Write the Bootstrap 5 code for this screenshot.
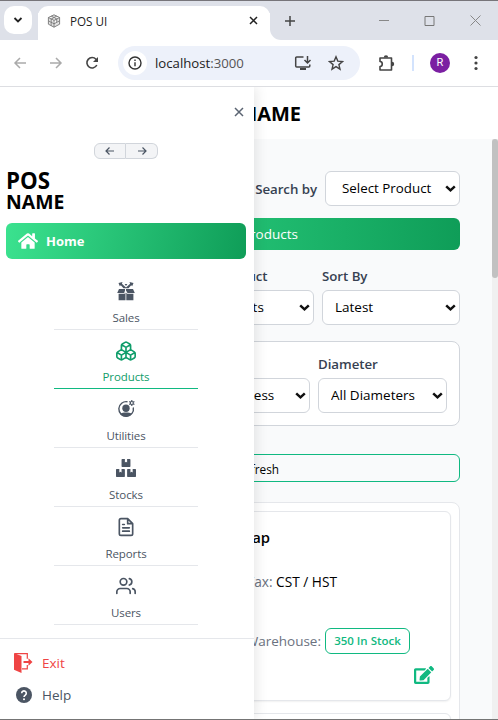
<!DOCTYPE html>
<html lang="en">
<head>
<meta charset="utf-8">
<meta name="viewport" content="width=device-width, initial-scale=1">
<title>POS UI</title>
<link href="https://cdn.jsdelivr.net/npm/bootstrap@5.3.0/dist/css/bootstrap.min.css" rel="stylesheet">
<style>
  body{font-family:"Open Sans","Noto Sans",sans-serif;font-size:13.5px;line-height:20px;color:#000;background:#fff}
  svg{display:block;flex:none}
  .window{height:720px;border-top:1px solid #77757a;border-bottom:1px solid #747474}
  .tabstrip{height:39px;background:#dee1e9}
  .tab-menu{width:28px;height:28px;margin:5px 0 0 4px;border-radius:10px;background:#fff}
  .strip-edge{width:38px;flex:none;background:#dee1e9;border-bottom-right-radius:11px;z-index:1}
  .strip-rest{background:#dee1e9;border-bottom-left-radius:11px;padding-left:15px}
  .tabs-base{background:linear-gradient(#dee1e9 12px,#fff 12px)}
  .browser-tab{width:232px;margin-top:5px;border-radius:10px 10px 0 0;background:#fff;padding:0 12px 5px 9px;font-size:11.7px;color:#222}
  .tab-title{padding-left:9px}
  .win-buttons{gap:35px;padding-right:17px}
  .toolbar{height:47px;background:#fff;border-bottom:1px solid #dddee2;padding:0 14px 0 12px}
  .tb-fwd{margin-left:20px}
  .omnibox{width:242px;height:34px;border-radius:17px;background:#edf1fa;margin-left:18px;padding:0 16px 0 5px}
  .site-info{width:24px;height:24px;border-radius:50%;background:#fff}
  .address{padding-left:8px;font-size:13.2px;color:#222}
  .port{color:#555}
  .star{margin-left:16px}
  .puzzle{margin-left:18px}
  .tb-rule{width:2px;height:16px;background:#d3e3fd;margin:0 16px}
  .avatar{width:20px;height:20px;border-radius:50%;background:#7b1fa2;color:#fff;font:11px/20px Roboto,sans-serif}
  .viewport{min-height:0}
  .page-head{height:52px;padding:2px 197px 0 0;font-size:20px;font-weight:700}
  .page-body{background:#f9fafb}
  .page-main{padding:32px 32px 0;min-width:0}
  .scroll-track{width:6px;background:#f0f0f0}
  .scroll-thumb{height:139px;border-radius:3px;background:#c1c1c1}
  .field-label{font-size:13.3px;font-weight:600;color:#374151;white-space:nowrap;letter-spacing:-.05px}
  .pick{height:35px;font-size:13.5px;color:#000;border:1px solid #d1d5db;border-radius:6px;padding:0 22px 0 12px;background-color:#fff;background-position:right 3px center;background-size:11px 8px;background-image:url("data:image/svg+xml,%3Csvg xmlns='http://www.w3.org/2000/svg' viewBox='0 0 11 8'%3E%3Cpath d='M1.2 1.4 5.5 5.4 9.8 1.4' fill='none' stroke='%23111' stroke-width='2.5'/%3E%3C/svg%3E")}
  .pick-search{width:135px;padding-left:16px;font-size:13.35px}
  .green-bar{height:32px;margin-top:12px;border-radius:6px;background:linear-gradient(90deg,#34e08c,#0f9d58);color:#fff}
  .green-bar span{padding-right:162px}
  .filters{display:grid;grid-template-columns:136px 138px 138px;gap:8px;margin-top:16px}
  .filter-panel{display:grid;grid-template-columns:128px 129px 129px;gap:8px;margin-top:16px;padding:12px;height:85px;border:1px solid #d1d5db;border-radius:8px;background:#fff}
  .filter-field{display:grid;grid-template-rows:20px 35px;row-gap:4px;min-width:0}
  .refresh-btn{height:28px;margin-top:28px;padding:2px 180px 0 0;border:1px solid #10b981;border-radius:6px;font-size:11.8px}
  .listing{margin-top:20px;padding:8px;border:1px solid #e5e7eb;border-radius:8px;background:#fff}
  .product{height:190px;border:1px solid #e5e7eb;border-radius:6px;background:#fff;box-shadow:0 1px 2px rgba(0,0,0,.06);margin-bottom:12px;padding:15px 16px}
  .product-name{font-size:14.8px;font-weight:600;padding-right:164px}
  .product-tax{margin-top:25px;padding-right:97px;font-size:13.7px}
  .stock-line{margin-top:36px;padding-right:24px}
  .soft{color:#6b7280}
  .stock-tag{width:85px;height:26px;border:1px solid #10b981;border-radius:6px;color:#10b981;font-size:11.5px;font-weight:600}
  .edit-icon{margin-top:12px}
  .sidebar{position:absolute;left:0;top:0;bottom:0;width:254px;background:#fff;box-shadow:2px 0 12px rgba(0,0,0,.10)}
  .side-close{padding:20px 10px 26px 0}
  .steps{padding-bottom:11px;margin-left:-2px}
  .step-btn{width:32px;height:16px;border:1px solid #d1d5db;background:#f3f4f6;padding:0}
  .brand{padding-left:6px}
  .brand-top{font-size:22.300px;line-height:22px;font-weight:700}
  .brand-sub{font-size:19.400px;line-height:20px;font-weight:700}
  .home-link{height:36px;margin:11px 8px 0 6px;padding-left:12px;border-radius:6px;background:linear-gradient(100deg,#3be28f,#0f9d58);color:#fff;font-weight:700;font-size:13px}
  .menu-list{margin:12px 56px 0 54px}
  .menu-item{height:59px;border-bottom:1px solid #e5e7eb;color:#4b5563;font-size:11.5px;line-height:16px;padding:10px 0 3px;letter-spacing:-.1px}
  .menu-item.current{color:#0f9d6a;border-color:#10b981}
  .side-foot{border-top:1px solid #e5e7eb;margin-top:13px;padding-top:8px;font-size:13.5px}
  .side-foot div{height:32px;color:#4b5563}
  .side-foot span{padding-left:8px}
  .side-foot .exit-link{color:#ef4444;padding-left:14px}
  .side-foot .help-link{padding-left:16px}
  .help-link span{margin-left:2px}
</style>
<script src="https://cdn.jsdelivr.net/npm/bootstrap@5.3.0/dist/js/bootstrap.bundle.min.js"></script>
</head>
<body class="overflow-hidden">
<div class="window d-flex flex-column">
  <div class="tabstrip d-flex flex-shrink-0">
    <div class="strip-edge">
      <div class="tab-menu d-flex align-items-center justify-content-center"><svg width="10" height="8" viewBox="0 0 10 8"><path d="M1.500 2 5 5.500 8.500 2" fill="none" stroke="#222" stroke-width="1.800"/></svg></div>
    </div>
    <div class="tabs-base d-flex flex-grow-1">
      <div class="browser-tab d-flex align-items-center">
        <svg width="14" height="14" viewBox="0 0 14 14" fill="#e2e2e2" stroke="#777" stroke-width=".9"><path d="M7 .8 12.600 3.500v6.700L7 13.200 1.400 10.200V3.500zM1.400 3.500 7 6.400l5.600-2.900M7 6.400v6.800M4.200 2.100l5.600 2.900v3M9.800 2.100 4.200 5v6.700M1.400 6.800 7 9.800l5.600-3"/></svg>
        <span class="tab-title flex-grow-1">POS UI</span>
        <svg width="9" height="9" viewBox="0 0 9 9"><path d="M1 1l7 7M8 1 1 8" stroke="#222" stroke-width="1.500"/></svg>
      </div>
      <div class="strip-rest flex-grow-1 d-flex align-items-center justify-content-between">
        <svg width="10" height="10" viewBox="0 0 10 10"><path d="M5 0v10M0 5h10" stroke="#444" stroke-width="1.500"/></svg>
        <div class="win-buttons d-flex align-items-center">
          <svg width="10" height="10" viewBox="0 0 10 10"><path d="M0 4.500h10" stroke="#888"/></svg>
          <svg width="11" height="10" viewBox="0 0 11 10"><path d="M1 .5h9v9H1z" fill="none" stroke="#777"/></svg>
          <svg width="11" height="11" viewBox="0 0 11 11"><path d="M.5.5l10 10M10.500.5l-10 10" stroke="#888"/></svg>
        </div>
      </div>
    </div>
  </div>
  <div class="toolbar d-flex align-items-center flex-shrink-0">
    <svg width="16" height="16" viewBox="0 0 16 16" fill="none" stroke="#aaa" stroke-width="1.500"><path d="M14 8H3M8 3 3 8l5 5"/></svg>
    <svg class="tb-fwd" width="16" height="16" viewBox="0 0 16 16" fill="none" stroke="#aaa" stroke-width="1.500"><path d="M2 8h11M8 3l5 5-5 5"/></svg>
    <svg class="tb-fwd" width="16" height="16" viewBox="0 0 16 16"><path d="M12.800 10a5.200 5.200 0 1 1-.8-5.700L13.300 6" fill="none" stroke="#444" stroke-width="1.600"/><path d="M14 2v5H9z" fill="#444"/></svg>
    <div class="omnibox d-flex align-items-center">
      <div class="site-info d-flex align-items-center justify-content-center"><svg width="14" height="14" viewBox="0 0 14 14" fill="none" stroke="#333" stroke-width="1.400"><circle cx="7" cy="7" r="6"/><path d="M7 6.200v4M7 3.500V5"/></svg></div>
      <span class="address flex-grow-1">localhost<span class="port">:3000</span></span>
      <svg width="18" height="16" viewBox="0 0 18 16" fill="none" stroke="#444" stroke-width="1.500"><path d="M9.500 2H2.700A1 1 0 0 0 1.700 3v8a1 1 0 0 0 1 1h12.100a1 1 0 0 0 1-1V9.500M13.500 1v6.500M10.500 5l3 3 3-3"/><path d="M6 13h6v2H6z" fill="#444" stroke="none"/></svg>
      <svg class="star" width="16" height="16" viewBox="0 0 16 16" fill="none" stroke="#444" stroke-width="1.400"><path d="M8 1.800l1.800 4.300 4.700.4-3.600 3.100 1.100 4.600L8 11.700l-4 2.500 1.100-4.600L1.500 6.500l4.700-.4z"/></svg>
    </div>
    <svg class="puzzle" width="18" height="18" viewBox="0 0 18 18"><path d="M2 4h11.500v12H2v-3.500c3 0 3-5 0-5z" fill="none" stroke="#444" stroke-width="1.600" stroke-linejoin="round"/><path d="M5.800 3.500a2.200 2.200 0 0 1 4.400 0zM14 7.800a2.200 2.200 0 0 1 0 4.400z" fill="#444"/></svg>
    <div class="tb-rule"></div>
    <div class="avatar text-center">R</div>
    <svg class="ms-auto" width="16" height="16" viewBox="0 0 16 16" fill="#444"><circle cx="8" cy="2.500" r="1.600"/><circle cx="8" cy="8" r="1.600"/><circle cx="8" cy="13.500" r="1.600"/></svg>
  </div>

  <div class="viewport position-relative flex-grow-1 d-flex flex-column overflow-hidden">
    <header class="page-head d-flex align-items-center justify-content-end flex-shrink-0"><span>NAME</span></header>
    <div class="page-body d-flex flex-grow-1">
      <main class="page-main flex-grow-1">
        <div class="d-flex align-items-center justify-content-end gap-2">
          <label class="field-label" for="search">Search by</label>
          <select id="search" class="form-select pick pick-search"><option>Select Product</option></select>
        </div>
        <div class="green-bar d-flex align-items-center justify-content-end"><span>Products</span></div>
        <div class="filters">
          <div></div>
          <div class="filter-field"><label class="field-label" for="product">Select Product</label><select id="product" class="form-select pick"><option>All Products</option></select></div>
          <div class="filter-field"><label class="field-label" for="sort">Sort By</label><select id="sort" class="form-select pick"><option>Latest</option></select></div>
        </div>
        <div class="filter-panel">
          <div></div>
          <div class="filter-field"><label class="field-label" for="thick">Thickness</label><select id="thick" class="form-select pick"><option>All Thickness</option></select></div>
          <div class="filter-field"><label class="field-label" for="diam">Diameter</label><select id="diam" class="form-select pick"><option>All Diameters</option></select></div>
        </div>
        <div class="refresh-btn d-flex align-items-center justify-content-end">Refresh</div>
        <div class="listing">
          <article class="product">
            <div class="product-name text-end">Cap</div>
            <div class="product-tax text-end"><span class="soft">Tax:</span> CST / HST</div>
            <div class="stock-line d-flex align-items-center justify-content-end gap-1"><span class="soft">Warehouse:</span><span class="stock-tag d-flex align-items-center justify-content-center">350 In Stock</span></div>
            <svg class="edit-icon ms-auto" width="20" height="18" viewBox="0 0 576 512" fill="#10b981"><path d="M402.600 83.200l90.200 90.200c3.800 3.800 3.800 10 0 13.800L274.400 405.600l-92.800 10.300c-12.400 1.400-22.900-9.100-21.500-21.500l10.300-92.800L388.800 83.200c3.800-3.800 10-3.800 13.800 0zm162-22.900l-48.800-48.800c-15.200-15.200-39.900-15.200-55.200 0l-35.400 35.400c-3.800 3.800-3.800 10 0 13.800l90.200 90.200c3.800 3.800 10 3.800 13.800 0l35.400-35.400c15.200-15.300 15.200-40 0-55.200zM384 346.200V448H64V128h229.800c3.200 0 6.200-1.300 8.500-3.500l40-40c7.600-7.600 2.200-20.500-8.500-20.500H48C21.500 64 0 85.500 0 112v352c0 26.500 21.500 48 48 48h352c26.500 0 48-21.500 48-48V306.200c0-10.700-12.900-16-20.500-8.500l-40 40c-2.200 2.300-3.500 5.300-3.500 8.500z"/></svg>
          </article>
          <article class="product mb-0"></article>
        </div>
      </main>
      <div class="scroll-track flex-shrink-0"><div class="scroll-thumb"></div></div>
    </div>

    <aside class="sidebar d-flex flex-column">
      <div class="side-close d-flex justify-content-end"><svg width="10" height="10" viewBox="0 0 10 10"><path d="M1 1l8 8M9 1 1 9" stroke="#5b6472" stroke-width="1.500"/></svg></div>
      <div class="steps d-flex justify-content-center">
        <button class="step-btn rounded-start d-flex align-items-center justify-content-center"><svg width="10" height="8" viewBox="0 0 10 8" fill="none" stroke="#4b5563" stroke-width="1.200"><path d="M9 4H1M4.500.5 1 4l3.500 3.500"/></svg></button>
        <button class="step-btn rounded-end border-start-0 d-flex align-items-center justify-content-center"><svg width="10" height="8" viewBox="0 0 10 8" fill="none" stroke="#4b5563" stroke-width="1.200"><path d="M1 4h8M5.500.5 9 4 5.500 7.500"/></svg></button>
      </div>
      <div class="brand"><div class="brand-top">POS</div><div class="brand-sub">NAME</div></div>
      <div class="home-link d-flex align-items-center gap-2 flex-shrink-0">
        <svg width="20" height="18" viewBox="0 0 576 512" fill="#fff"><path d="M280.370 148.260L96 300.110V464a16 16 0 0 0 16 16l112.060-.29a16 16 0 0 0 15.920-16V368a16 16 0 0 1 16-16h64a16 16 0 0 1 16 16v95.640a16 16 0 0 0 16 16.050L464 480a16 16 0 0 0 16-16V300L295.670 148.260a12.190 12.190 0 0 0-15.300 0zM571.600 251.470L488 182.560V44.050a12 12 0 0 0-12-12h-56a12 12 0 0 0-12 12v72.610L318.470 43a48 48 0 0 0-61 0L4.340 251.470a12 12 0 0 0-1.600 16.900l25.500 31A12 12 0 0 0 45.150 301l235.220-193.740a12.190 12.190 0 0 1 15.300 0L530.900 301a12 12 0 0 0 16.900-1.600l25.500-31a12 12 0 0 0-1.700-16.930z"/></svg>
        <span>Home</span>
      </div>
      <nav class="menu-list">
        <div class="menu-item d-flex flex-column align-items-center justify-content-between"><svg width="20" height="20" viewBox="0 0 20 20" fill="currentColor"><path d="M3 8h6v1.500l-.8 2.500H1.200zM10 8h7l1.800 4h-7.300L10 9.500zM2.600 12.800h6l.9-1.300v7.700H2.600zM10.300 11.500l.9 1.300h6.200v6.400h-7.100z"/><path d="M2.500 2 6.500 1l-.6 1.700L10 6.400l4.100-3.700L13.500 1l4 1-1.300 3.200-1-1L12.500 7.300h-5L4.800 4.200l-1 1zM8.600 3h2.800L10 4.900z"/></svg><span>Sales</span></div>
        <div class="menu-item current d-flex flex-column align-items-center justify-content-between"><svg width="22" height="22" viewBox="0 0 24 24" fill="none" stroke="currentColor" stroke-width="1.800" stroke-linecap="round" stroke-linejoin="round"><path d="M2.970 12.920A2 2 0 0 0 2 14.630v3.240a2 2 0 0 0 .97 1.710l3 1.800a2 2 0 0 0 2.060 0L12 19v-5.500l-5-3-4.030 2.420ZM7 16.500l-4.740-2.850M7 16.500l5-3M7 16.500v5.170M12 13.500V19l3.970 2.380a2 2 0 0 0 2.060 0l3-1.800a2 2 0 0 0 .97-1.710v-3.240a2 2 0 0 0-.97-1.710L17 10.500l-5 3ZM17 16.500l-5-3M17 16.500l4.740-2.850M17 16.500v5.170M7.970 4.420A2 2 0 0 0 7 6.130v4.370l5 3 5-3V6.130a2 2 0 0 0-.97-1.710l-3-1.800a2 2 0 0 0-2.060 0l-3 1.800ZM12 8 7.260 5.150M12 8l4.740-2.850M12 13.500V8"/></svg><span>Products</span></div>
        <div class="menu-item d-flex flex-column align-items-center justify-content-between"><svg width="20" height="20" viewBox="0 0 20 20" fill="currentColor"><path d="M11.500 2.800A7.300 7.300 0 1 0 17.300 8.500" fill="none" stroke="currentColor" stroke-width="1.400"/><circle cx="10" cy="9.300" r="3.700"/><path d="M4 14.800c3-1.600 9-1.600 12 0-2.500 4-9.500 4-12 0z"/><circle cx="15.800" cy="4" r="1.500" fill="none" stroke="currentColor" stroke-width="1.100"/><path d="M15.800 1v1.500M15.800 5.500V7M13.200 2.500l1.300.8M17.100 4.700l1.300.8M13.200 5.500l1.300-.8M17.100 3.300l1.300-.8" stroke="currentColor" stroke-width="1.200"/></svg><span>Utilities</span></div>
        <div class="menu-item d-flex flex-column align-items-center justify-content-between"><svg width="20" height="20" viewBox="0 0 576 512" fill="currentColor"><path d="M560 288h-80v96l-32-21.300-32 21.300v-96h-80c-8.800 0-16 7.200-16 16v192c0 8.800 7.200 16 16 16h224c8.800 0 16-7.200 16-16V304c0-8.800-7.200-16-16-16zm-384-64h224c8.800 0 16-7.200 16-16V16c0-8.800-7.200-16-16-16h-80v96l-32-21.300L256 96V0h-80c-8.800 0-16 7.200-16 16v192c0 8.800 7.200 16 16 16zm64 64h-80v96l-32-21.300L96 384v-96H16c-8.800 0-16 7.200-16 16v192c0 8.800 7.200 16 16 16h224c8.800 0 16-7.200 16-16V304c0-8.800-7.200-16-16-16z"/></svg><span>Stocks</span></div>
        <div class="menu-item d-flex flex-column align-items-center justify-content-between"><svg width="20" height="20" viewBox="0 0 24 24" fill="none" stroke="currentColor" stroke-width="2" stroke-linecap="round" stroke-linejoin="round"><path d="M14 2H6a2 2 0 0 0-2 2v16a2 2 0 0 0 2 2h12a2 2 0 0 0 2-2V8zM14 2v6h6M16 13H8M16 17H8M10 9H8"/></svg><span>Reports</span></div>
        <div class="menu-item d-flex flex-column align-items-center justify-content-between"><svg width="20" height="20" viewBox="0 0 24 24" fill="none" stroke="currentColor" stroke-width="2" stroke-linecap="round" stroke-linejoin="round"><path d="M17 21v-2a4 4 0 0 0-4-4H5a4 4 0 0 0-4 4v2M23 21v-2a4 4 0 0 0-3-3.870M16 3.130a4 4 0 0 1 0 7.750"/><circle cx="9" cy="7" r="4"/></svg><span>Users</span></div>
      </nav>
      <div class="side-foot">
        <div class="exit-link d-flex align-items-center"><svg width="20" height="20" viewBox="0 0 20 20" fill="currentColor"><path d="M0 0l7.500 3v17L0 16.800z"/><path d="M1 .6h12.300v5.200M8 15.900h5.300v-4" fill="none" stroke="currentColor" stroke-width="1.200"/><path d="M9.500 8h5V5.200L18.500 9l-4 3.800V10h-5z"/></svg><span>Exit</span></div>
        <div class="help-link d-flex align-items-center"><svg width="16" height="16" viewBox="0 0 16 16"><circle cx="8" cy="8" r="8" fill="currentColor"/><path d="M5.700 6.200a2.300 2.300 0 1 1 3.600 1.900C8.400 8.700 8 9 8 10" fill="none" stroke="#fff" stroke-width="1.600"/><circle cx="8" cy="12.200" r="1" fill="#fff"/></svg><span>Help</span></div>
      </div>
    </aside>
  </div>
</div>
</body>
</html>
